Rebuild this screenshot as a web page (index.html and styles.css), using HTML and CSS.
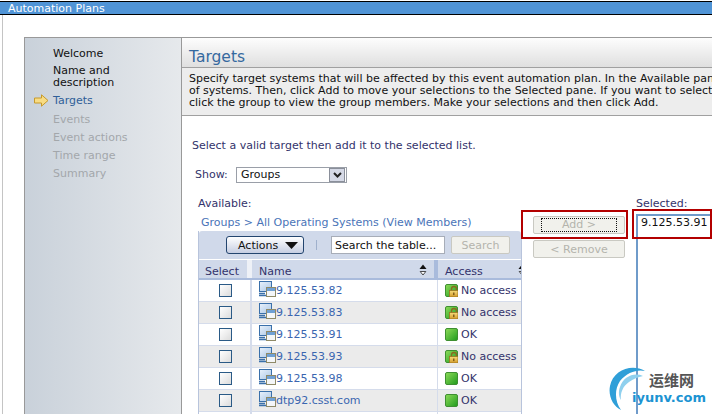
FILE: index.html
```html
<!DOCTYPE html>
<html lang="en">
<head>
<meta charset="utf-8">
<title>Automation Plans</title>
<link rel="stylesheet" href="styles.css">
</head>
<body>
<svg class="defs" width="0" height="0" aria-hidden="true">
  <defs>
    <linearGradient id="gs" x1="0" y1="0" x2="1" y2="1"><stop offset="0" stop-color="#8fdc5a"/><stop offset="1" stop-color="#1f9a1c"/></linearGradient>
    <linearGradient id="gl" x1="0" y1="0" x2="0" y2="1"><stop offset="0" stop-color="#f7dc7a"/><stop offset="1" stop-color="#d29a2a"/></linearGradient>
    <linearGradient id="gm" x1="0" y1="0" x2="1" y2="1"><stop offset="0" stop-color="#eaf2fb"/><stop offset="1" stop-color="#a9c6e6"/></linearGradient>
    <symbol id="sys" viewBox="0 0 18 16">
      <rect x="1.500" y="0.500" width="12" height="10" fill="url(#gm)" stroke="#3a70aa"/>
      <path d="M1 12.500h6M1 14.500h7" stroke="#3a70aa" stroke-width="1.300"/>
      <rect x="8.500" y="6.500" width="9" height="9" fill="#f4f6f8" stroke="#8f8a68"/>
      <rect x="9" y="7" width="8" height="3" fill="#6fa0d4"/>
    </symbol>
    <symbol id="ok" viewBox="0 0 13 13">
      <rect x="0.5" y="0.5" width="12" height="12" rx="1.5" fill="url(#gs)" stroke="#3f8f32"/>
    </symbol>
    <symbol id="locked" viewBox="0 0 13 13">
      <rect x="0.5" y="0.5" width="12" height="12" rx="1.5" fill="url(#gs)" stroke="#3f8f32"/>
      <path d="M6.500 7V5a2.500 2.500 0 0 1 5 0v2" fill="none" stroke="#8a6a20" stroke-width="1.300"/>
      <rect x="4.500" y="6.500" width="8.500" height="6.500" fill="url(#gl)" stroke="#9a7420" stroke-width=".8"/>
      <rect x="8.200" y="8.500" width="1.200" height="2.600" fill="#6a4a10"/>
    </symbol>
    <symbol id="sort" viewBox="0 0 8 12">
      <path d="M4 .5 7.500 5H.5z" fill="#111"/>
      <path d="M1.200 7.500h5.600L4 11z" fill="#fff" stroke="#222" stroke-width=".8"/>
    </symbol>
  </defs>
</svg>

<header class="titlebar">Automation Plans</header>

<div class="page">
  <div class="frame">
    <nav class="nav">
      <div class="step done">Welcome</div>
      <div class="step done multi">Name and<br>description</div>
      <div class="step current">
        <svg class="arrow" width="15" height="13" viewBox="0 0 15 13"><path d="M.5 4h7V.8L14 6.500 7.500 12.200V9h-7z" fill="#f8dc84" stroke="#c79a2a"/></svg>
        Targets
      </div>
      <div class="step off">Events</div>
      <div class="step off">Event actions</div>
      <div class="step off">Time range</div>
      <div class="step off">Summary</div>
    </nav>

    <main class="main">
      <div class="heading"><h1>Targets</h1></div>
      <p class="desc">Specify target systems that will be affected by this event automation plan. In the Available pane<br>of systems. Then, click Add to move your selections to the Selected pane. If you want to select<br>click the group to view the group members. Make your selections and then click Add.</p>

      <div class="body">
        <p class="intro">Select a valid target then add it to the selected list.</p>
        <div class="show">
          <span class="lbl show-lbl">Show:</span>
          <div class="select"><span>Groups</span><i class="drop"><svg width="9" height="6" viewBox="0 0 9 6"><path d="M1 1l3.500 3.500L8 1" fill="none" stroke="#222" stroke-width="2"/></svg></i></div>
        </div>

        <div class="picker">
          <section class="avail">
            <div class="lbl pane-label">Available:</div>
            <div class="crumb">Groups &gt; All Operating Systems (View Members)</div>
            <div class="tbl">
              <div class="tools">
                <button class="actions">Actions <svg width="13" height="7" viewBox="0 0 13 7"><path d="M0 0h13L6.500 7z" fill="#111"/></svg></button>
                <span class="sep"></span>
                <div class="search">Search the table...</div>
                <button class="ghost searchbtn">Search</button>
              </div>
              <div class="row head">
                <div class="c1">Select</div>
                <div class="c2">Name<svg class="sort" width="8" height="12"><use href="#sort"/></svg></div>
                <div class="c3">Access<svg class="sort" width="8" height="12"><use href="#sort"/></svg></div>
              </div>
              <div class="row"><div class="c1"><i class="box"></i></div><div class="c2"><svg class="sys" width="18" height="16"><use href="#sys"/></svg><a>9.125.53.82</a></div><div class="c3"><svg class="st" width="13" height="13"><use href="#locked"/></svg>No access</div></div>
              <div class="row alt"><div class="c1"><i class="box"></i></div><div class="c2"><svg class="sys" width="18" height="16"><use href="#sys"/></svg><a>9.125.53.83</a></div><div class="c3"><svg class="st" width="13" height="13"><use href="#locked"/></svg>No access</div></div>
              <div class="row"><div class="c1"><i class="box"></i></div><div class="c2"><svg class="sys" width="18" height="16"><use href="#sys"/></svg><a>9.125.53.91</a></div><div class="c3"><svg class="st" width="13" height="13"><use href="#ok"/></svg>OK</div></div>
              <div class="row alt"><div class="c1"><i class="box"></i></div><div class="c2"><svg class="sys" width="18" height="16"><use href="#sys"/></svg><a>9.125.53.93</a></div><div class="c3"><svg class="st" width="13" height="13"><use href="#locked"/></svg>No access</div></div>
              <div class="row"><div class="c1"><i class="box"></i></div><div class="c2"><svg class="sys" width="18" height="16"><use href="#sys"/></svg><a>9.125.53.98</a></div><div class="c3"><svg class="st" width="13" height="13"><use href="#ok"/></svg>OK</div></div>
              <div class="row alt"><div class="c1"><i class="box"></i></div><div class="c2"><svg class="sys" width="18" height="16"><use href="#sys"/></svg><a>dtp92.csst.com</a></div><div class="c3"><svg class="st" width="13" height="13"><use href="#ok"/></svg>OK</div></div>
              <div class="row"><div class="c1"></div><div class="c2"></div><div class="c3"></div></div>
            </div>
          </section>

          <section class="mid">
            <button class="ghost wide"><span class="focus">Add &gt;</span></button>
            <button class="ghost wide">&lt; Remove</button>
          </section>

          <section class="sel">
            <div class="lbl sel-label">Selected:</div>
            <div class="list">9.125.53.91</div>
          </section>
        </div>
      </div>
    </main>
  </div>
</div>

<div class="mark mark-add"></div>
<div class="mark mark-sel"></div>

<div class="wm">
  <svg width="42" height="46" viewBox="0 0 42 46"><path d="M36 5C23-3 4 4 1 20c-2 10 3 20 11 24C6 36 5 24 11 15 18 6 29 3 36 5z" fill="#2f9fd8"/><path d="M34 10C25 6 14 11 11 21c-2 5-1 10 1 13-1-7 2-14 8-18 4-3 9-5 14-6z" fill="#8fd0ee"/></svg>
  <span class="wm-cn">运维网</span>
  <span class="wm-en">iyunv.com</span>
</div>
</body>
</html>
```
FILE: styles.css
```css
* { box-sizing: border-box; }
html, body { margin: 0; height: 100%; }
body {
  width: 712px; height: 414px; overflow: hidden; position: relative;
  background: #fff; color: #111;
  font: 11px/12px "DejaVu Sans", Verdana, sans-serif;
}
.defs { position: absolute; }
.titlebar {
  margin-top: 1px; height: 14px; padding: 0 8px;
  background: #5094d6; color: #fff;
  border-top: 1px solid #000; border-bottom: 1px solid #000;
  line-height: 13px; font-size: 11px;
}
.page {
  height: 399px; margin-left: 2px; padding: 22px 0 0 21px;
  border-left: 1px solid #c4c4c4; overflow: hidden;
}
.frame {
  display: flex; width: 800px; height: 420px;
  border: 1px solid #999;
}
.nav {
  flex: 0 0 157px; padding: 10px 0 0 28px;
  border-right: 1px solid #999;
  background: linear-gradient(90deg, #c9d1da, #e6e9ec);
}
.step { position: relative; height: 12px; margin-bottom: 6px; }
.step.multi { height: 24px; margin-bottom: 6px; }
.done { color: #111; margin-bottom: 5px; }
.current { color: #2f5f98; margin-bottom: 7px; }
.off { color: #a3a7ab; }
.arrow { position: absolute; left: -19px; top: -1px; }

.main { flex: 1; }
.heading {
  height: 30px; padding: 10px 0 0 7px;
  background: linear-gradient(#fdfdfd, #dfdfdf);
  border-bottom: 1px solid #a0a0a0;
}
h1 { margin: 0; font: 400 15.5px/18px "DejaVu Sans", Verdana, sans-serif; color: #35699f; }
.desc {
  margin: 0; height: 48px; padding: 5px 0 0 7px;
  white-space: nowrap; background: #ededed; border-bottom: 1px solid #a0a0a0;
  color: #111;
}
.body { padding: 24px 0 0 10px; color: #33336b; }
.intro { margin: 0 0 15px; height: 12px; }
.lbl { color: #33336b; }
.show { display: flex; align-items: center; margin-left: 3px; height: 16px; margin-bottom: 15px; }
.show-lbl { width: 41px; }
.select {
  display: flex; align-items: center; justify-content: space-between;
  width: 111px; height: 16px; padding: 0 1px 0 4px;
  border: 1px solid #9a9fa8; color: #111; background: #fff;
}
.drop {
  display: flex; align-items: center; justify-content: center;
  width: 16px; height: 14px; background: #d5d9e6; border: 1px solid #8a8f9a;
}
.picker { display: flex; }
.avail { width: 335px; margin-left: 6px; flex: none; }
.pane-label { height: 12px; margin-bottom: 7px; }
.crumb { height: 12px; color: #4a74b8; margin-left: 3px; margin-bottom: 2px; white-space: nowrap; }
.tbl {
  width: 324px; background: #fff;
  border-right: 1px solid #b8c4dc; border-left: 1px solid #b8c4dc;
}
.tools {
  display: flex; align-items: center; height: 28px; padding: 0 0 0 27px;
  background: #d0d9ea; border-radius: 3px 3px 0 0;
}
.actions {
  display: flex; align-items: center; justify-content: space-between;
  width: 78px; height: 18px; padding: 1px 5px 0 11px;
  font: 11px "DejaVu Sans", Verdana, sans-serif; color: #111;
  border: 1px solid #23456f; border-radius: 3px;
  background: linear-gradient(#fff, #c6cee2);
}
.sep { width: 1px; height: 10px; margin: 0 14px 0 12px; background: #9fb0cc; }
.search {
  width: 114px; height: 18px; padding: 3px 3px 0;
  background: #fff; border: 1px solid #a7adb8; color: #111; white-space: nowrap; overflow: hidden;
}
.ghost {
  font: 11px "DejaVu Sans", Verdana, sans-serif; color: #b4b4ac;
  background: #f1f1ec; border: 1px solid #c9c9c2; border-radius: 2px; padding: 0;
}
.searchbtn { width: 59px; height: 18px; margin-left: 6px; }
.row { display: flex; height: 22px; border-bottom: 1px solid #d5dceb; background: #fff; }
.row.alt { background: #ebebeb; }
.row.head { height: 21px; background: #d0d9ea; border-top: 1px solid #fff; border-bottom: 2px solid #a9bbdc; color: #33336b; }
.c1 { width: 53px; display: flex; align-items: center; justify-content: center; padding-left: 1px; border-right: 2px solid #d5dceb; }
.c2 { width: 186px; display: flex; align-items: center; padding-left: 6px; border-right: 1px solid #d5dceb; position: relative; color: #3a66b0; }
.c3 { flex: 1; min-width: 0; display: flex; align-items: center; padding-left: 7px; position: relative; color: #33336b; white-space: nowrap; overflow: hidden; }
.head .c1, .head .c2, .head .c3 { padding-top: 5px; }
.head .c1 { border-right: 5px solid #eef1f7; padding-left: 0; padding-right: 2px; }
.head .c2 { border-right: 4px solid #a9bbdc; padding-left: 7px; color: #33336b; }
.sort { position: absolute; right: 7px; top: 4px; padding: 0; }
.head .c3 .sort { right: -5px; }
.box {
  width: 13px; height: 13px; border: 1px solid #2a5a86;
  background: linear-gradient(135deg, #fff, #dcdcdc);
}
.sys { flex: none; margin: -3px 0 0 0; }
.st { flex: none; margin-right: 3px; }

.mid { width: 92px; flex: none; padding-top: 18px; display: flex; flex-direction: column; gap: 6px; }
.wide { width: 92px; height: 18px; display: flex; align-items: center; justify-content: center; }
.focus { width: 76px; height: 14px; line-height: 12px; border: 1px dotted #111; }
.sel { flex: 1; margin-left: 11px; }
.sel-label { height: 12px; margin-bottom: 4px; }
.list {
  height: 300px; padding: 1px 3px; color: #111;
  border-left: 2px solid #6f9bca; border-top: 2px solid #6f9bca;
}
.mark { position: absolute; border: 2px solid #b30000; }
.mark-add { left: 521px; top: 210px; width: 107px; height: 29px; }
.mark-sel { left: 632px; top: 209px; width: 80px; height: 30px; }

.wm { position: absolute; left: 609px; top: 366px; width: 103px; height: 48px; }
.wm svg { position: absolute; left: 0; top: 0; }
.wm-cn { position: absolute; left: 40px; top: 6px; font: 700 15px/16px "Noto Sans CJK SC", sans-serif; color: #555; white-space: nowrap; }
.wm-en { position: absolute; left: 23px; top: 24px; font: 700 13px/16px "DejaVu Sans", sans-serif; color: #1c93d2; white-space: nowrap; }
```
